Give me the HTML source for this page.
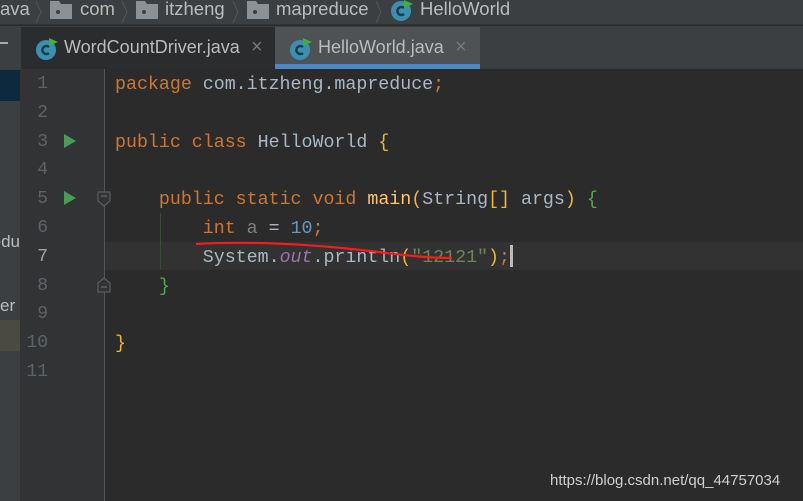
<!DOCTYPE html>
<html><head><meta charset="utf-8"><style>
*{margin:0;padding:0;box-sizing:border-box}
body{width:803px;height:501px;overflow:hidden;background:#2b2b2b;position:relative;font-family:"Liberation Sans",sans-serif}
.abs{position:absolute}
.bc{left:0;top:0;width:803px;height:25px;background:#3c3f41;border-bottom:1px solid #323232;color:#bbbbbb;font-size:18.5px}
.bc span{position:absolute;top:-2px}
.tabs{left:0;top:26px;width:803px;height:43px;background:#3c3f41}
.code{font-family:"Liberation Mono",monospace;font-size:18.3px;color:#a9b7c6;white-space:pre;line-height:28.8px}
.k{color:#cc7832}.f{color:#ffc66d}.s{color:#6a8759}.n{color:#6897bb}.o{color:#9876aa;font-style:italic}.g{color:#808080}.y{color:#e8ba36}.gr{color:#54a857}
.ln{font-family:"Liberation Mono",monospace;font-size:18px;color:#606366;text-align:right;width:28px;left:20px;line-height:28.8px}
</style></head><body>
<div class="abs bc">
<span style="left:0">ava</span>
<svg class="abs" style="left:34px;top:0" width="10" height="24"><path d="M2 1 L7 12 L2 23" stroke="#555" fill="none"/></svg>
<svg class="abs" style="left:50px;top:1px" width="22" height="18"><path d="M0 0h9l2 3h11v15H0z" fill="#8b9195"/><circle cx="8" cy="11" r="2" fill="#3c3f41"/></svg>
<span style="left:80px">com</span>
<svg class="abs" style="left:120px;top:0" width="10" height="24"><path d="M2 1 L7 12 L2 23" stroke="#555" fill="none"/></svg>
<svg class="abs" style="left:136px;top:1px" width="22" height="18"><path d="M0 0h9l2 3h11v15H0z" fill="#8b9195"/><circle cx="8" cy="11" r="2" fill="#3c3f41"/></svg>
<span style="left:165px">itzheng</span>
<svg class="abs" style="left:231px;top:0" width="10" height="24"><path d="M2 1 L7 12 L2 23" stroke="#555" fill="none"/></svg>
<svg class="abs" style="left:247px;top:1px" width="22" height="18"><path d="M0 0h9l2 3h11v15H0z" fill="#8b9195"/><circle cx="8" cy="11" r="2" fill="#3c3f41"/></svg>
<span style="left:276px">mapreduce</span>
<svg class="abs" style="left:374px;top:0" width="10" height="24"><path d="M2 1 L7 12 L2 23" stroke="#555" fill="none"/></svg>
<svg class="abs" style="left:390px;top:0" width="24" height="22"><circle cx="11" cy="11" r="10" fill="#3d8fb0"/><path d="M14 8a4 4 0 1 0 0 6" stroke="#1d3c4a" stroke-width="2.5" fill="none"/><path d="M14 0l9 4-9 4z" fill="#3cb043"/></svg>
<span style="left:420px">HelloWorld</span>
</div>
<div class="abs tabs">
<div class="abs" style="left:0;top:16px;width:8px;height:2px;background:#aaa"></div>
<div class="abs" style="left:21px;top:1px;width:254px;height:42px;background:#2b2c2e"></div>
<div class="abs" style="left:275px;top:1px;width:205px;height:42px;background:#4e5254"></div>
<div class="abs" style="left:275px;top:38px;width:205px;height:5px;background:#4a88c7"></div>
<svg class="abs" style="left:35px;top:11px" width="24" height="24"><circle cx="11" cy="13" r="10" fill="#3d8fb0"/><path d="M14 10a4 4 0 1 0 0 6" stroke="#1d3c4a" stroke-width="2.5" fill="none"/><path d="M14 1l9 4-9 4z" fill="#3cb043"/></svg>
<div class="abs" style="left:64px;top:11px;color:#bbbbbb;font-size:18px">WordCountDriver.java</div>
<div class="abs" style="left:251px;top:10px;color:#777;font-size:20px">×</div>
<svg class="abs" style="left:289px;top:11px" width="24" height="24"><circle cx="11" cy="13" r="10" fill="#3d8fb0"/><path d="M14 10a4 4 0 1 0 0 6" stroke="#1d3c4a" stroke-width="2.5" fill="none"/><path d="M14 1l9 4-9 4z" fill="#3cb043"/></svg>
<div class="abs" style="left:318px;top:11px;color:#bbbbbb;font-size:18px">HelloWorld.java</div>
<div class="abs" style="left:455px;top:10px;color:#777;font-size:20px">×</div>
</div>
<div class="abs" style="left:0;top:69px;width:20px;height:432px;background:#3c3f41"></div>
<div class="abs" style="left:0;top:70px;width:20px;height:31px;background:#0d293e"></div>
<div class="abs" style="left:0;top:320px;width:20px;height:31px;background:#4b4a40"></div>
<div class="abs" style="left:0;top:232px;width:20px;color:#bbb;font-size:17px;overflow:hidden;white-space:nowrap;direction:rtl">edu</div>
<div class="abs" style="left:0;top:296px;width:20px;color:#bbb;font-size:17px;overflow:hidden;white-space:nowrap">er</div>
<div class="abs" style="left:20px;top:69px;width:85px;height:432px;background:#313335"></div>
<div class="abs" style="left:104px;top:69px;width:1px;height:432px;background:#555"></div>
<div class="abs" style="left:105px;top:242px;width:698px;height:28px;background:#323232"></div>
<div class="abs ln" style="top:70px">1<br>2<br>3<br>4<br>5<br>6<br><span style="color:#a4a3a3">7</span><br>8<br>9<br>10<br>11</div>
<svg class="abs" style="left:64px;top:134px" width="12" height="14"><path d="M0 0L12 7L0 14z" fill="#499c54"/></svg>
<svg class="abs" style="left:64px;top:191px" width="12" height="14"><path d="M0 0L12 7L0 14z" fill="#499c54"/></svg>
<svg class="abs" style="left:97px;top:191px" width="14" height="16"><path d="M1 1h12v9l-6 5-6-5z" fill="#313335" stroke="#666"/><path d="M4 5h6" stroke="#777"/></svg>
<svg class="abs" style="left:97px;top:277px" width="14" height="16"><path d="M1 15h12v-9l-6-5-6 5z" fill="#313335" stroke="#666"/><path d="M4 10h6" stroke="#777"/></svg>
<div class="abs" style="left:160px;top:213px;width:1px;height:57px;background:#3b4a3b"></div>
<div class="abs code" style="left:115px;top:71px"><span class="k">package</span> com.itzheng.mapreduce<span class="k">;</span>

<span class="k">public class</span> HelloWorld <span class="y">{</span>

    <span class="k">public static void</span> <span class="f">main</span><span class="y">(</span>String<span class="y">[]</span> args<span class="y">)</span> <span class="gr">{</span>
        <span class="k">int</span> <span class="g">a</span> = <span class="n">10</span><span class="k">;</span>
        System.<span class="o">out</span>.println<span class="y">(</span><span class="s">"12121"</span><span class="y">)</span><span class="k">;</span>
    <span class="gr">}</span>

<span class="y">}</span>
</div>
<div class="abs" style="left:510px;top:245px;width:3px;height:22px;background:#bbb"></div>
<svg class="abs" style="left:190px;top:238px" width="270" height="28"><path d="M6 6 C60 3 120 6 180 13 C220 18 240 20 262 20" stroke="#ff1a1a" stroke-width="2.2" fill="none"/></svg>
<div class="abs" style="left:550px;top:472px;color:#cfcfcf;font-size:15px">https://blog.csdn.net/qq_44757034</div>
</body></html>
